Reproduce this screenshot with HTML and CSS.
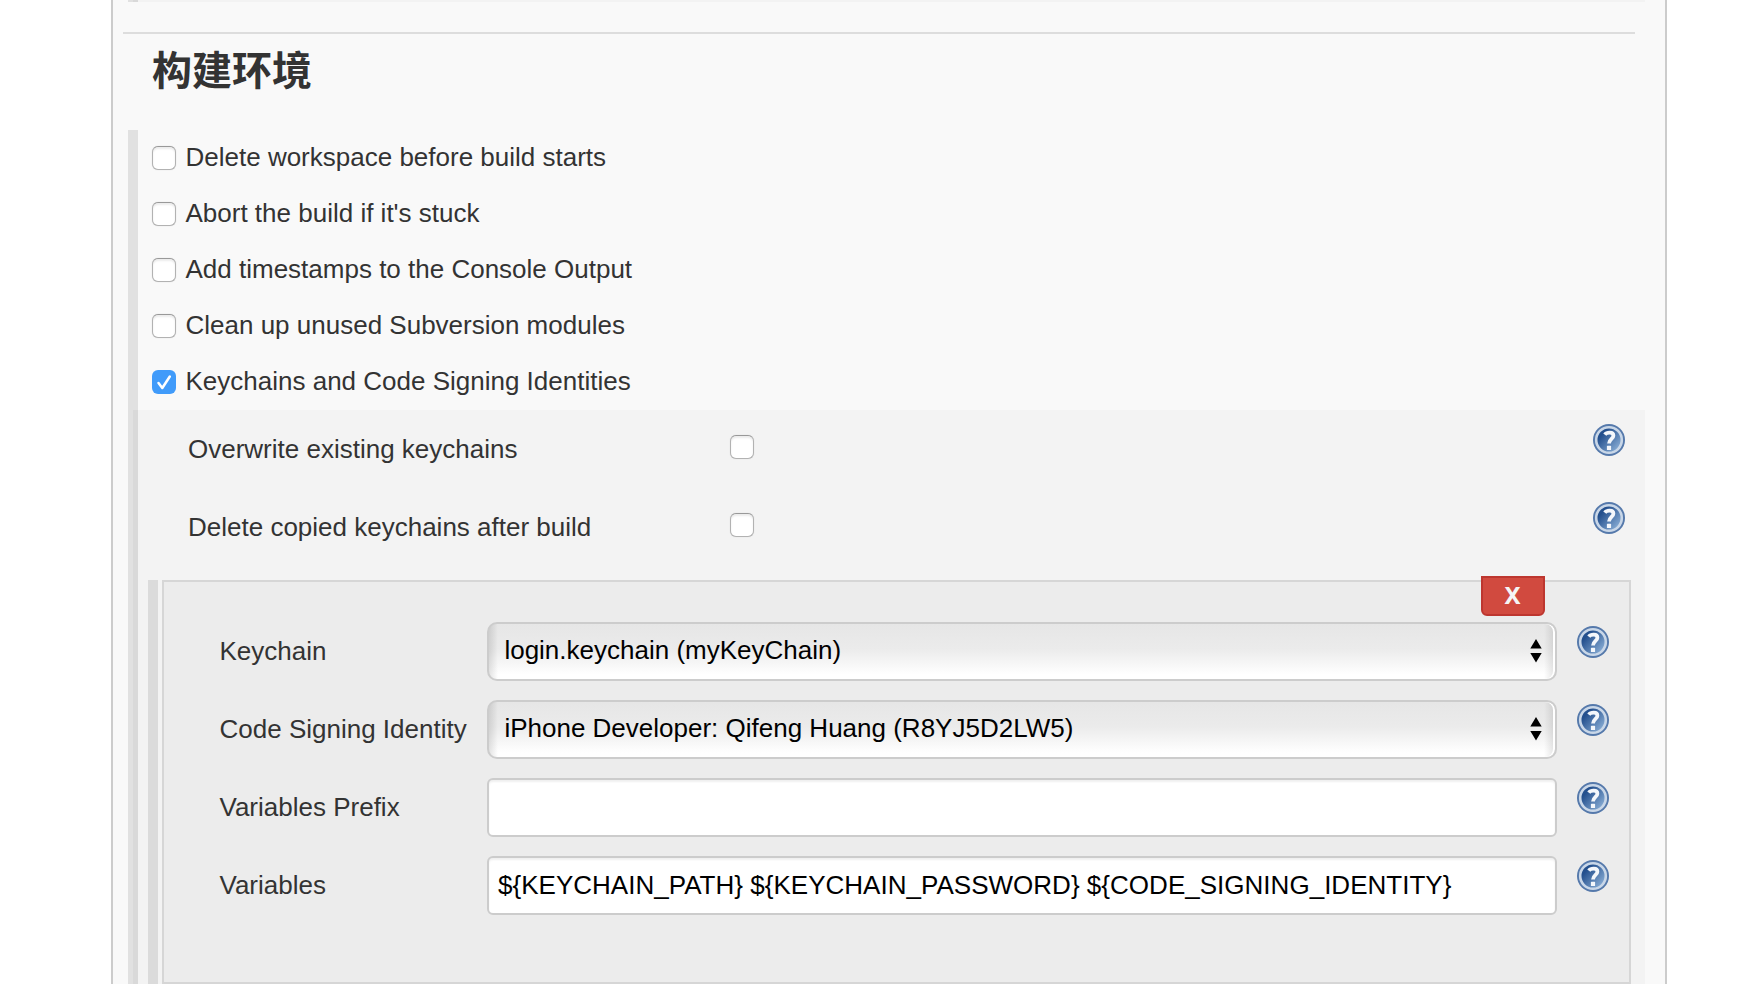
FILE: index.html
```html
<!DOCTYPE html>
<html lang="zh-CN">
<head>
<meta charset="utf-8">
<title>构建环境</title>
<link rel="stylesheet" href="styles.css">
</head>
<body>
<svg class="defs" width="0" height="0">
  <defs>
    <linearGradient id="disc" x1="0.1" y1="0.2" x2="0.9" y2="0.9">
      <stop offset="0.15" stop-color="#24508e"/>
      <stop offset="1" stop-color="#8db1d8"/>
    </linearGradient>
    <symbol id="help" viewBox="0 0 32 32">
      <circle cx="16" cy="16" r="16" fill="#5579ab"/>
      <circle cx="16" cy="16" r="12.8" fill="url(#disc)" stroke="#c9d7e8" stroke-width="2.6"/>
      <path d="M11.8 10.6C13.6 8.2 20.4 7.4 20.4 11.7C20.4 14.9 16 15 16 19.6" fill="none" stroke="#f4f7fb" stroke-width="3.8"/>
      <rect x="13.9" y="21.8" width="4.2" height="4.2" rx="0.6" fill="#f4f7fb"/>
    </symbol>
    <symbol id="arrows" viewBox="0 0 12 24">
      <path d="M6 0L11.7 9.5H.3ZM6 23.5L11.7 14H.3Z" fill="#000"/>
    </symbol>
  </defs>
</svg>
<main class="panel">
  <div class="previous"></div>
  <hr class="rule">
  <h1 class="title">构建环境</h1>
  <section class="env">
    <label class="option"><span class="check"></span><span class="text">Delete workspace before build starts</span></label>
    <label class="option"><span class="check"></span><span class="text">Abort the build if it's stuck</span></label>
    <label class="option"><span class="check"></span><span class="text">Add timestamps to the Console Output</span></label>
    <label class="option"><span class="check"></span><span class="text">Clean up unused Subversion modules</span></label>
    <label class="option"><span class="check checked"><svg viewBox="0 0 24 24"><path d="M6.5 13L10.3 18L17.8 6.5" fill="none" stroke="#fff" stroke-width="2.5" stroke-linecap="round" stroke-linejoin="round"/></svg></span><span class="text">Keychains and Code Signing Identities</span></label>
    <div class="nested">
      <div class="setting"><span class="name">Overwrite existing keychains</span><span class="check"></span><svg class="help"><use href="#help"/></svg></div>
      <div class="setting"><span class="name">Delete copied keychains after build</span><span class="check"></span><svg class="help"><use href="#help"/></svg></div>
      <div class="repeat">
        <div class="handle"></div>
        <div class="chunk">
          <div class="delete">X</div>
          <div class="field"><span class="name">Keychain</span><div class="select"><span>login.keychain (myKeyChain)</span><svg class="arrows"><use href="#arrows"/></svg></div><svg class="help"><use href="#help"/></svg></div>
          <div class="field"><span class="name">Code Signing Identity</span><div class="select"><span>iPhone Developer: Qifeng Huang (R8YJ5D2LW5)</span><svg class="arrows"><use href="#arrows"/></svg></div><svg class="help"><use href="#help"/></svg></div>
          <div class="field"><span class="name">Variables Prefix</span><div class="input"></div><svg class="help"><use href="#help"/></svg></div>
          <div class="field"><span class="name">Variables</span><div class="input"><span class="vars">${KEYCHAIN_PATH} ${KEYCHAIN_PASSWORD} ${CODE_SIGNING_IDENTITY}</span></div><svg class="help"><use href="#help"/></svg></div>
        </div>
      </div>
    </div>
  </section>
</main>
</body>
</html>
```
FILE: styles.css
```css
* { box-sizing: border-box; }
body {
  margin: 0;
  height: 984px;
  overflow: hidden;
  background: #fff;
  color: #333;
  font: 26px/30px "Liberation Sans", "Noto Sans CJK SC", sans-serif;
}
.defs { position: absolute; }
.panel {
  width: 1556px;
  height: 984px;
  margin-left: 111px;
  padding: 0 20px 0 15px;
  border: solid #ccc;
  border-width: 0 2px;
  background: #f9f9f9;
}
.previous {
  height: 2px;
  background: linear-gradient(90deg, #e1e1e1 5px, #d9d9d9 5px 10px, #f3f3f3 10px);
}
.rule {
  height: 2px;
  margin: 30px 10px 0 -5px;
  border: 0;
  background: #ddd;
}
.title {
  height: 96px;
  margin: 0;
  padding: 4px 0 0 24px;
  font: bold 40px/60px "Noto Sans CJK SC", sans-serif;
}
.env {
  height: 854px;
  border-left: 10px solid #e1e1e1;
}
.option {
  display: flex;
  align-items: center;
  gap: 10px;
  height: 56px;
  padding-left: 14px;
  padding-bottom: 1px;
}
.option .text { padding-bottom: 2px; margin-left: -0.5px; }
.check {
  width: 24px;
  height: 24px;
  margin-top: 1px;
  border: 1px solid #b2b2b2;
  border-top-color: #999;
  border-radius: 6px;
  background: #fff;
  box-shadow: inset 0 2px 2px #ececec, 0 0 1px #ccc;
}
.checked {
  border: 0;
  background: #409bfa;
  box-shadow: none;
}
.checked svg { display: block; }
.nested {
  height: 574px;
  margin-left: -10px;
  border-left: 5px solid #e1e1e1;
  background: linear-gradient(90deg, #d9d9d9 5px, #f3f3f3 5px);
}
.setting {
  display: grid;
  grid-template-columns: 542px 863px 32px;
  height: 78px;
  padding: 14px 0 0 55px;
}
.setting .name { padding-top: 10px; }
.setting .check { margin-top: 11px; }
.help { width: 32px; height: 32px; }
.repeat {
  display: flex;
  gap: 4px;
  height: 404px;
  margin: 14px 14px 0 15px;
}
.handle { width: 10px; background: #dbdbdb; }
.chunk {
  position: relative;
  flex: 1;
  display: flex;
  flex-direction: column;
  gap: 19px;
  padding: 40px 20px 0 56px;
  border: 2px solid #d6d6d6;
  background: #ececec;
}
.delete {
  position: absolute;
  top: -6px;
  right: 84px;
  width: 64px;
  height: 40px;
  border: 2px solid #bd362f;
  border-radius: 0 0 6px 6px;
  background: #d14a3f;
  color: #f5f5f5;
  font: bold 24px/34px "Noto Sans", sans-serif;
  text-align: center;
  padding-right: 1px;
}
.field {
  display: grid;
  grid-template-columns: 267px 1070px 32px;
  column-gap: 0;
  height: 59px;
}
.field .name { padding-top: 14px; margin-left: -0.5px; }
.field .help { margin: 4px 0 0 20px; }
.select, .input {
  display: flex;
  align-items: center;
  border: 2px solid #ccc;
  color: #000;
}
.select {
  justify-content: space-between;
  padding: 0 13px 3px 15.4px;
  border-radius: 10px;
  background:
    linear-gradient(90deg, #0000001c, #0000 9px, #0000 calc(100% - 11px), #0000001c),
    linear-gradient(#e6e6e6, #ebebeb 45%, #fff 92%);
  box-shadow: inset -2px 0 0 #fff;
}
.arrows { width: 12px; height: 24px; margin-top: 2px; }
.input {
  padding: 0 9px 2px;
  border-radius: 6px;
  background: #fff;
  box-shadow: inset 0 2px 2px #f0f0f0;
}
.vars { white-space: nowrap; letter-spacing: 0.02px; }
```
